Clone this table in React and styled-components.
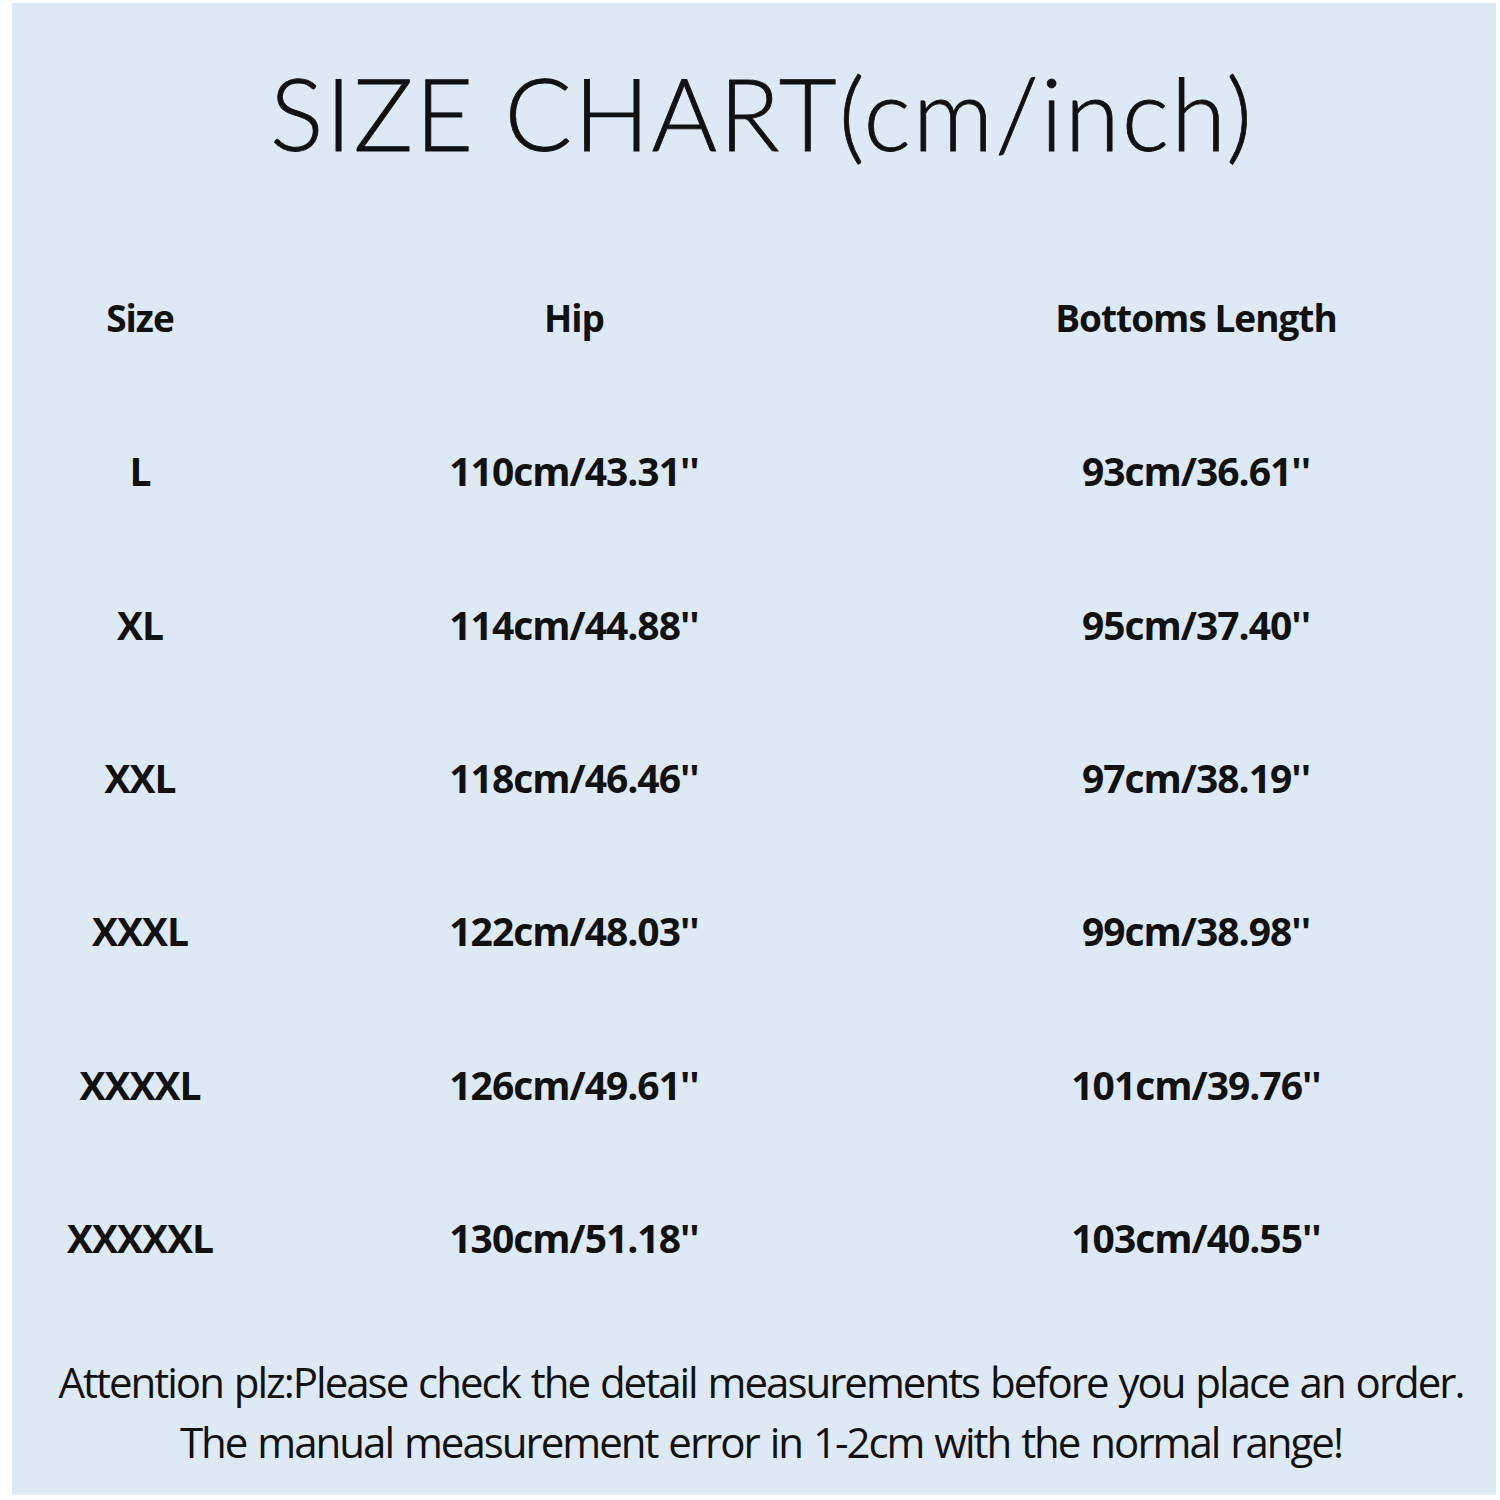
import React from "react";
import styled, { createGlobalStyle } from "styled-components";

const rows = [
  ["L", "110cm/43.31''", "93cm/36.61''"],
  ["XL", "114cm/44.88''", "95cm/37.40''"],
  ["XXL", "118cm/46.46''", "97cm/38.19''"],
  ["XXXL", "122cm/48.03''", "99cm/38.98''"],
  ["XXXXL", "126cm/49.61''", "101cm/39.76''"],
  ["XXXXXL", "130cm/51.18''", "103cm/40.55''"],
];

const Global = createGlobalStyle`
  body {
    margin: 0;
    background: #ffffff;
  }
`;

const Page = styled.div`
  width: 1500px;
  height: 1500px;
  padding: 3px 4px 5px 12px;
  box-sizing: border-box;
`;

const Panel = styled.div`
  height: 100%;
  background: #dde9f4;
  display: flex;
  flex-direction: column;
  border-bottom: 2px solid #e8f1f9;
  box-sizing: border-box;
`;

const Title = styled.h1`
  margin: 0;
  height: 238px;
  display: flex;
  align-items: center;
  justify-content: center;
  padding: 0 0 20px 16px;
  box-sizing: border-box;
  font-family: Lato, sans-serif;
  font-weight: 300;
  font-size: 100px;
  color: #111;
  letter-spacing: 2px;
  -webkit-text-stroke: 0.8px #111;
`;

const Table = styled.div`
  display: grid;
  grid-template-columns: 256px 612px 1fr;
  grid-auto-rows: 153.3px;
`;

const Cell = styled.div`
  display: flex;
  align-items: center;
  justify-content: center;
  padding-left: ${(p) => (p.$last ? "16px" : "0")};
  font-family: "Open Sans", sans-serif;
  font-weight: 700;
  font-size: ${(p) => (p.$head ? "37px" : "39px")};
  letter-spacing: -1px;
  color: #111;
`;

const Note = styled.div`
  margin-top: 38px;
  padding-left: 14px;
  text-align: center;
  font-family: "Open Sans", sans-serif;
  font-size: 42px;
  line-height: 60px;
  color: #111;
  letter-spacing: -2px;
  word-spacing: 2px;
`;

export default function App() {
  return (
    <>
      <Global />
      <Page>
        <Panel>
          <Title>SIZE CHART(cm/inch)</Title>
          <Table>
            <Cell $head>Size</Cell>
            <Cell $head>Hip</Cell>
            <Cell $head $last>Bottoms Length</Cell>
            {rows.map((r) => (
              <React.Fragment key={r[0]}>
                <Cell>{r[0]}</Cell>
                <Cell>{r[1]}</Cell>
                <Cell $last>{r[2]}</Cell>
              </React.Fragment>
            ))}
          </Table>
          <Note>
            Attention plz:Please check the detail measurements before you place an order.
            <br />
            The manual measurement error in 1-2cm with the normal range!
          </Note>
        </Panel>
      </Page>
    </>
  );
}
